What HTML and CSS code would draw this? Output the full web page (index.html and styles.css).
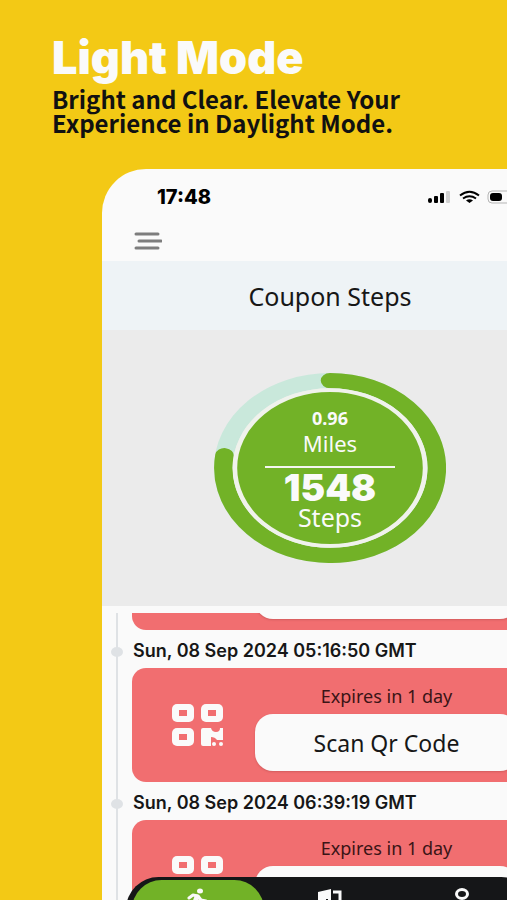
FILE: index.html
```html
<!DOCTYPE html>
<html lang="en">
<head>
<meta charset="utf-8">
<meta name="viewport" content="width=device-width, initial-scale=1">
<title>Light Mode</title>
<link rel="stylesheet" href="styles.css">
</head>
<body>
<svg class="defs" aria-hidden="true">
  <symbol id="qr" viewBox="0 0 52 42">
    <g fill="currentColor">
      <rect width="22" height="18" rx="5"/>
      <rect x="29" width="22" height="18" rx="5"/>
      <rect y="24" width="22" height="18" rx="5"/>
      <path d="M31 24h8q1 4 5 4t4-4h3v12h-6q-2-3-6-3v9h-8q-2 0-2-2V26q0-2 2-2z"/>
      <circle cx="42" cy="40" r="2"/>
      <circle cx="49" cy="40" r="2"/>
    </g>
    <path fill="#f16e70" d="M7 6h8v6H7zM36 6h8v6h-8zM7 30h8v6H7z"/>
  </symbol>
</svg>
<main class="page">
  <header class="intro">
    <h1>Light Mode</h1>
    <p>Bright and Clear. Elevate Your<br>Experience in Daylight Mode.</p>
  </header>
  <section class="phone">
    <div class="status">
      <span class="time">17:48</span>
      <svg class="signals" width="120" height="16" viewBox="0 0 120 16" aria-hidden="true">
        <rect x="1" y="9" width="4" height="5" rx="2"/><rect x="7" y="7" width="4" height="7" rx="1"/><rect x="13" y="4" width="4" height="10" rx="1"/><rect x="19" y="2" width="4" height="12" rx="1" fill="#d0d0d0"/>
        <g fill="none" stroke="#000" stroke-width="2"><path d="M33 6.500q9.500-7.500 19 0M36 9.500q6.500-4.500 13 0"/></g>
        <path d="M39 11.500q3.500-2.500 7 0L42.500 14z"/>
        <rect x="61" y="2" width="34" height="12" rx="4" fill="none" stroke="#b5b5b5"/><rect x="63" y="4" width="12" height="8" rx="3"/>
      </svg>
    </div>
    <div class="toolbar">
      <button class="menu" type="button" aria-label="Menu">
        <svg width="28" height="18" viewBox="0 0 28 18" fill="none" stroke="#7d7d7d" stroke-width="3" stroke-linecap="round"><path d="M2 2h22M5 9h22M2 16h22"/></svg>
      </button>
    </div>
    <h2 class="title">Coupon Steps</h2>
    <div class="summary">
      <div class="dial">
        <svg class="ring" viewBox="-100 -100 200 200" preserveAspectRatio="none" aria-hidden="true">
          <circle r="92" fill="none" stroke="#c9e8db" stroke-width="16"/>
          <path d="M0-92A92 92 0 1 1-91-13" fill="none" stroke="#72b227" stroke-width="16" stroke-linecap="round"/>
          <circle r="82" fill="#72b227" stroke="#f0f2ec" stroke-width="4"/>
        </svg>
        <div class="figures">
          <strong class="miles">0.96</strong>
          <span class="miles-label">Miles</span>
          <strong class="steps">1548</strong>
          <span class="steps-label">Steps</span>
        </div>
      </div>
    </div>
    <div class="list">
      <article class="card cut"><span class="scan"></span></article>
      <h3>Sun, 08 Sep 2024 05:16:50 GMT</h3>
      <article class="card">
        <svg class="qr" aria-hidden="true"><use href="#qr"/></svg>
        <div class="offer"><p>Expires in 1 day</p><button class="scan" type="button">Scan Qr Code</button></div>
      </article>
      <h3>Sun, 08 Sep 2024 06:39:19 GMT</h3>
      <article class="card">
        <svg class="qr" aria-hidden="true"><use href="#qr"/></svg>
        <div class="offer"><p>Expires in 1 day</p><button class="scan" type="button" aria-label="Scan Qr Code"></button></div>
      </article>
    </div>
    <nav class="tabs">
      <button type="button" class="active" aria-label="Steps">
        <svg width="24" height="28" viewBox="0 0 24 28" fill="none" stroke="#fafafa" stroke-width="3" stroke-linecap="round" stroke-linejoin="round"><ellipse cx="14" cy="3" rx="3" ry="2.500" fill="#fafafa" stroke="none"/><path d="M3 10l4-3 5 1 3 4 5 1"/><path stroke-width="5" d="M11 9l-2 5"/><path d="M9 14l5 4 1 7M9 15l-3 5-4 1"/></svg>
      </button>
      <button type="button" aria-label="Rewards">
        <svg width="26" height="28" viewBox="0 0 26 28"><path fill="#fafafa" d="M1 4l13-3v26L1 24z"/><path fill="none" stroke="#fafafa" stroke-width="3" d="M16 4h7v20h-7"/><path stroke="#151618" stroke-width="2" d="M10 11v4"/></svg>
      </button>
      <button type="button" aria-label="Profile">
        <svg width="26" height="28" viewBox="0 0 26 28" fill="none" stroke="#fafafa" stroke-width="3"><ellipse cx="13" cy="6" rx="5.500" ry="4.500"/><path d="M3 26q0-9 10-9t10 9"/></svg>
      </button>
    </nav>
  </section>
</main>
</body>
</html>
```
FILE: styles.css
```css
* { box-sizing: border-box; }
body, h1, h2, h3, p { margin: 0; }
body { font-family: "Noto Sans", "Open Sans", sans-serif; color: #171717; }
button { font: inherit; color: inherit; border: 0; padding: 0; background: none; }
.defs { position: absolute; width: 0; height: 0; }

.page {
  display: flex;
  flex-direction: column;
  height: 100vh;
  overflow: hidden;
  background: #f3c915;
}
.intro { padding: 36px 24px 34px 52px; }
.intro h1 { font: 900 45px/44px Inter, sans-serif; color: #fafafa; }
.intro p { padding-top: 7px; font-family: "Noto Sans CJK SC", "Noto Sans", sans-serif; font-weight: 700; font-size: 24px; line-height: 24px; color: #111; white-space: nowrap; }

.phone {
  position: relative;
  flex: 1;
  min-height: 0;
  margin: 0 -51px 0 102px;
  overflow: hidden;
  display: flex;
  flex-direction: column;
  background: #fafafa;
  border-radius: 44px 44px 0 0;
}
.phone > * { flex-shrink: 0; }
.status { display: flex; justify-content: space-between; align-items: center; height: 56px; padding-left: 55px; padding-right: 11px; }
.time { font: 800 20px/24px Inter, sans-serif; color: #000; }
.toolbar { height: 36px; padding-left: 32px; }
.menu { display: block; height: 32px; }
.menu svg { display: block; }
.title { padding: 18px 0 17px; font-weight: 400; font-size: 25px; line-height: 34px; text-align: center; background: #eef3f6; }
.summary { display: flex; justify-content: center; padding: 43px 0; background: #ebebeb; }
.dial { display: grid; width: 232px; height: 190px; }
.ring, .figures { grid-area: 1 / 1; width: 100%; height: 100%; }
.figures { display: flex; flex-direction: column; align-items: center; padding-top: 33px; color: #fafafa; }
.miles { font-size: 18px; line-height: 24px; }
.miles-label { width: 130px; padding-bottom: 10px; font-size: 22px; line-height: 26px; text-align: center; border-bottom: 2px solid #f4f6f0; }
.steps { padding-top: 3px; font: 900 37px/34px Inter, sans-serif; }
.steps-label { font-size: 25px; line-height: 24px; }

.list { position: relative; padding: 7px 0 0 30px; }
.list::before { content: ""; position: absolute; left: 14px; top: 7px; bottom: 0; width: 2px; background: #dfe2e5; }
h3 { position: relative; padding: 10px 0 6px 1px; font: 600 18px/22px Inter, sans-serif; }
h3::before { content: ""; position: absolute; left: -21px; top: 17px; width: 12px; height: 10px; border-radius: 50%; background: #dfe2e5; }
.card { display: flex; height: 114px; padding-left: 40px; background: #f16e70; border-radius: 14px; }
.qr { width: 52px; height: 42px; margin-top: 36px; color: #fafafa; }
.offer { flex: 1; margin-left: 31px; padding-top: 16px; margin-right: 40px; }
.offer p { font-size: 18px; line-height: 24px; padding-bottom: 6px; text-align: center; color: #3a1416; }
.scan { display: block; width: 100%; height: 57px; border-radius: 18px; background: #fafafa; font-size: 23px; box-shadow: 0 1px 2px #a0404060; }
.card.cut { height: 17px; padding: 0 40px 0 123px; border-radius: 0 0 14px 14px; overflow: hidden; align-items: flex-end; }
.cut .scan { margin-bottom: 11px; }

.tabs { position: absolute; left: 24px; right: 24px; bottom: -42px; height: 65px; display: flex; padding: 3px 6px; background: #151618; border-radius: 38px; }
.tabs button { flex: 1; padding-top: 8px; border-radius: 34px; display: flex; justify-content: center; align-items: flex-start; }
.tabs .active { background: #72b227; }
```
